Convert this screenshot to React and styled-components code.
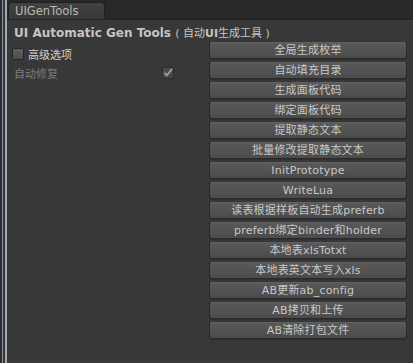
import React from 'react';
import styled, { createGlobalStyle } from 'styled-components';

const GlobalStyle = createGlobalStyle`
  html, body {
    margin: 0;
    padding: 0;
    background: #383838;
  }
  body {
    font-family: "DejaVu Sans", "Noto Sans CJK SC", sans-serif;
    font-size: 11px;
    color: #c8c8c8;
  }
`;

const Window = styled.div`
  display: flex;
  width: 413px;
  height: 363px;
  overflow: hidden;
  background: #383838;
`;

const EdgeStrip = styled.div`
  flex: 0 0 7px;
  background: linear-gradient(
    to right,
    #2c2c2c 0 2px,
    #8a96a2 2px 3px,
    #353535 3px 5px,
    #a2a6ab 5px 7px
  );
`;

const Main = styled.div`
  flex: 1;
  display: flex;
  flex-direction: column;
`;

const TabBar = styled.div`
  height: 20px;
  flex: 0 0 20px;
  background: #282828;
  border-bottom: 1px solid #222;
  box-sizing: border-box;
  display: flex;
  align-items: flex-end;
  padding-left: 1px;
`;

const Tab = styled.div`
  width: 97px;
  height: 17px;
  box-sizing: border-box;
  background: linear-gradient(#414141, #3a3a3a);
  border: 1px solid #1f1f1f;
  border-bottom: none;
  border-radius: 3px 3px 0 0;
  color: #b8b8b8;
  font-size: 11.5px;
  line-height: 16px;
  padding-left: 6px;
`;

const Content = styled.div`
  flex: 1;
  display: flex;
  flex-direction: column;
`;

const Title = styled.div`
  padding: 6px 0 0 7px;
  height: 15px;
  line-height: 15px;
  font-size: 12px;
  font-weight: bold;
  color: #c4c4c4;
  white-space: nowrap;
`;

const Sub = styled.span`
  font-weight: normal;
  font-size: 11px;
`;

const Body = styled.div`
  display: flex;
`;

const Options = styled.div`
  flex: 1;
  display: flex;
  flex-direction: column;
  padding: 3px 0 0 5px;
`;

const OptionRow = styled.div`
  display: flex;
  align-items: center;
  height: 19px;
  color: ${(p) => (p.$disabled ? '#7c7c7c' : '#d2d2d2')};
`;

const Label = styled.span`
  width: ${(p) => (p.$width ? p.$width + 'px' : 'auto')};
  padding-left: ${(p) => p.$indent || 0}px;
  box-sizing: border-box;
`;

const Box = styled.span`
  width: 12px;
  height: 12px;
  box-sizing: border-box;
  border: 1px solid #262626;
  border-radius: 2px;
  background: linear-gradient(#5e5e5e, #4c4c4c);
  margin-right: 4px;
  display: inline-flex;
  align-items: center;
  justify-content: center;
  opacity: ${(p) => (p.$disabled ? 0.6 : 1)};
`;

const Buttons = styled.div`
  width: 198px;
  margin-right: 6px;
  display: flex;
  flex-direction: column;
  gap: 2px;
`;

const Button = styled.button`
  height: 18px;
  padding: 0;
  box-sizing: border-box;
  border: 1px solid #2a2a2a;
  border-top-color: #363636;
  border-radius: 3px;
  background: linear-gradient(#5a5a5a, #4b4b4b);
  box-shadow: inset 0 1px 0 #626262, 0 1px 0 #303030;
  color: #c8c8c8;
  font-family: "DejaVu Sans", "Noto Sans CJK SC", sans-serif;
  font-size: 11px;
  letter-spacing: 0.2px;
  line-height: 15px;
  text-align: center;
  white-space: nowrap;
  cursor: pointer;
`;

const actions = [
  '全局生成枚举',
  '自动填充目录',
  '生成面板代码',
  '绑定面板代码',
  '提取静态文本',
  '批量修改提取静态文本',
  'InitPrototype',
  'WriteLua',
  '读表根据样板自动生成preferb',
  'preferb绑定binder和holder',
  '本地表xlsTotxt',
  '本地表英文本写入xls',
  'AB更新ab_config',
  'AB拷贝和上传',
  'AB清除打包文件',
];

function Check() {
  return (
    <svg width="11" height="11" viewBox="0 0 11 11">
      <path d="M1.5 5.8 L4.3 8.6 L9.8 1.6" fill="none" stroke="#e4e4e4" strokeWidth="2" />
    </svg>
  );
}

export default function App() {
  return (
    <Window>
      <GlobalStyle />
      <EdgeStrip />
      <Main>
        <TabBar>
          <Tab>UIGenTools</Tab>
        </TabBar>
        <Content>
          <Title>
            UI Automatic Gen Tools <Sub>( 自动<b>UI</b>生成工具 )</Sub>
          </Title>
          <Body>
            <Options>
              <OptionRow>
                <Box />
                <Label>高级选项</Label>
              </OptionRow>
              <OptionRow $disabled>
                <Label $width={150} $indent={2}>自动修复</Label>
                <Box $disabled>
                  <Check />
                </Box>
              </OptionRow>
            </Options>
            <Buttons>
              {actions.map((a) => (
                <Button key={a}>{a}</Button>
              ))}
            </Buttons>
          </Body>
        </Content>
      </Main>
    </Window>
  );
}
